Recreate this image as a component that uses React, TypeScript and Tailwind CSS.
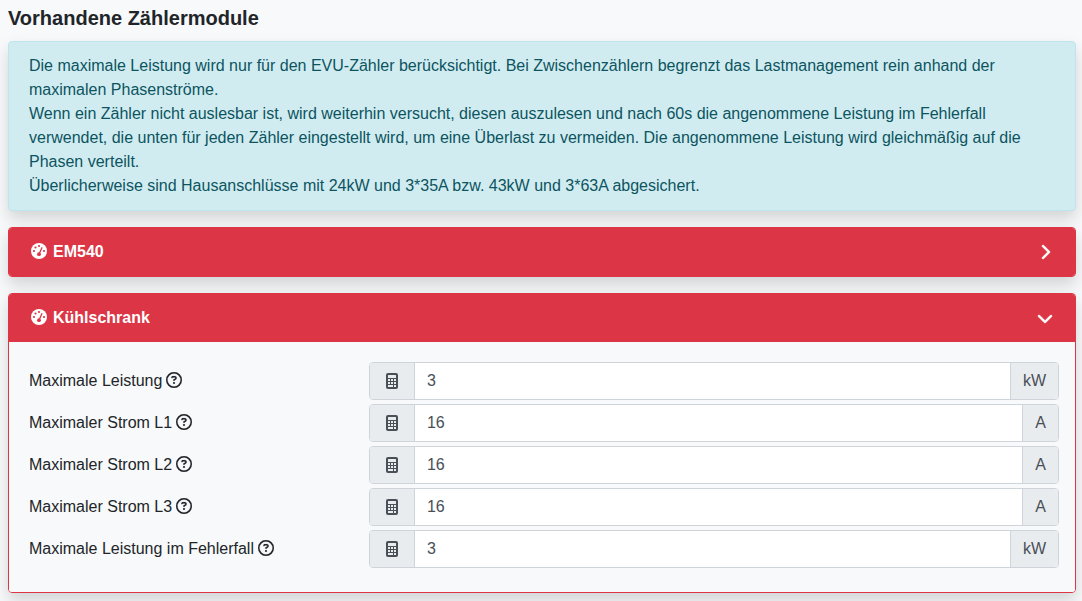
import { useState, type ReactNode } from 'react'
import { FaChevronDown, FaChevronRight, FaRegCircleQuestion } from 'react-icons/fa6'

interface NumberField {
  id: string
  label: string
  value: number
  unit: string
}

const COUNTER_FIELDS: NumberField[] = [
  { id: 'max-power', label: 'Maximale Leistung', value: 3, unit: 'kW' },
  { id: 'max-current-l1', label: 'Maximaler Strom L1', value: 16, unit: 'A' },
  { id: 'max-current-l2', label: 'Maximaler Strom L2', value: 16, unit: 'A' },
  { id: 'max-current-l3', label: 'Maximaler Strom L3', value: 16, unit: 'A' },
  { id: 'max-power-error', label: 'Maximale Leistung im Fehlerfall', value: 3, unit: 'kW' },
]

const SHADOW = 'shadow-[0_8px_16px_rgba(0,0,0,0.15)]'

function GaugeIcon() {
  return (
    <svg viewBox="0 0 16 16" className="size-4" aria-hidden="true">
      <circle cx="8" cy="8" r="8" fill="currentColor" />
      <g className="fill-[#dc3545]">
        <circle cx="8" cy="3" r="1.1" />
        <circle cx="4.5" cy="4.5" r="1.1" />
        <circle cx="3" cy="8" r="1.1" />
        <circle cx="13" cy="8" r="1.1" />
        <circle cx="8" cy="11.2" r="1.9" />
      </g>
      <path d="M8.2 10.8 10.9 4.8" className="stroke-[#dc3545]" strokeWidth="1.3" strokeLinecap="round" />
    </svg>
  )
}

function CalculatorIcon() {
  return (
    <svg viewBox="0 0 12 16" className="w-3 h-4" aria-hidden="true">
      <rect width="12" height="16" rx="2" fill="currentColor" />
      <g className="fill-[#e9ecef]">
        <rect x="2" y="2" width="8" height="3" rx="0.5" />
        <rect x="2" y="6" width="2" height="2" />
        <rect x="5" y="6" width="2" height="2" />
        <rect x="8" y="6" width="2" height="2" />
        <rect x="2" y="9" width="2" height="2" />
        <rect x="5" y="9" width="2" height="2" />
        <rect x="8" y="9" width="2" height="2" />
        <rect x="2" y="12" width="5" height="2" />
        <rect x="8" y="12" width="2" height="2" />
      </g>
    </svg>
  )
}

function NumberRow({ field }: { field: NumberField }) {
  const [value, setValue] = useState(String(field.value))

  return (
    <div className="flex mb-1">
      <div className="w-[33%] shrink-0 flex items-center gap-1 pb-px">
        <label htmlFor={field.id}>{field.label}</label>
        <button type="button" className="pb-px" aria-label={`Hilfe zu ${field.label}`}>
          <FaRegCircleQuestion className="size-4" strokeWidth={4} />
        </button>
      </div>
      <div className="flex-1 min-w-0 h-[38px] flex border border-[#ced4da] rounded bg-white text-[#495057] overflow-hidden">
        <span className="flex items-center justify-center w-[45px] shrink-0 bg-[#e9ecef] border-r border-[#ced4da]">
          <CalculatorIcon />
        </span>
        <input
          id={field.id}
          type="text"
          inputMode="numeric"
          value={value}
          onChange={(e) => setValue(e.target.value)}
          className="flex-1 min-w-0 px-3 pb-px outline-none"
        />
        <span className="flex items-center px-3 pb-px bg-[#e9ecef] border-l border-[#ced4da]">{field.unit}</span>
      </div>
    </div>
  )
}

interface CardProps {
  title: string
  defaultOpen?: boolean
  children?: ReactNode
}

function CounterCard({ title, defaultOpen = false, children }: CardProps) {
  const [open, setOpen] = useState(defaultOpen)
  const Chevron = open ? FaChevronDown : FaChevronRight

  return (
    <section className={`mb-4 border border-[#dc3545] rounded overflow-hidden ${SHADOW}`}>
      <button
        type="button"
        aria-expanded={open}
        onClick={() => setOpen(!open)}
        className="w-full flex items-center px-5 py-3 bg-[#dc3545] text-white font-bold text-left"
      >
        <span className="w-5 mr-1 pb-0.5 flex justify-center">
          <GaugeIcon />
        </span>
        <span className="flex-1">{title}</span>
        <span className="w-5 flex justify-center">
          <Chevron className="size-4" strokeWidth={16} />
        </span>
      </button>
      {open && <div className="bg-[#f8f9fa] pl-5 pr-4 py-5">{children}</div>}
    </section>
  )
}

export default function App() {
  return (
    <main className="min-h-screen bg-[#f8f9fa] text-[#212529] text-base px-2 pt-1.5 pr-1.5 font-['Liberation_Sans',Arial,sans-serif]">
      <h2 className="text-xl leading-6 font-bold mb-[11px]">Vorhandene Zählermodule</h2>
      <div
        role="alert"
        className={`mb-4 px-5 py-3 border border-[#bee5eb] rounded bg-[#d1ecf1] text-[#0c5460] ${SHADOW}`}
      >
        <p>
          Die maximale Leistung wird nur für den EVU-Zähler berücksichtigt. Bei Zwischenzählern begrenzt das
          Lastmanagement rein anhand der maximalen Phasenströme.
        </p>
        <p>
          Wenn ein Zähler nicht auslesbar ist, wird weiterhin versucht, diesen auszulesen und nach 60s die angenommene
          Leistung im Fehlerfall verwendet, die unten für jeden Zähler eingestellt wird, um eine Überlast zu vermeiden.
          Die angenommene Leistung wird gleichmäßig auf die Phasen verteilt.
        </p>
        <p>Überlicherweise sind Hausanschlüsse mit 24kW und 3*35A bzw. 43kW und 3*63A abgesichert.</p>
      </div>
      <CounterCard title="EM540" />
      <CounterCard title="Kühlschrank" defaultOpen>
        {COUNTER_FIELDS.map((field) => (
          <NumberRow key={field.id} field={field} />
        ))}
      </CounterCard>
    </main>
  )
}
